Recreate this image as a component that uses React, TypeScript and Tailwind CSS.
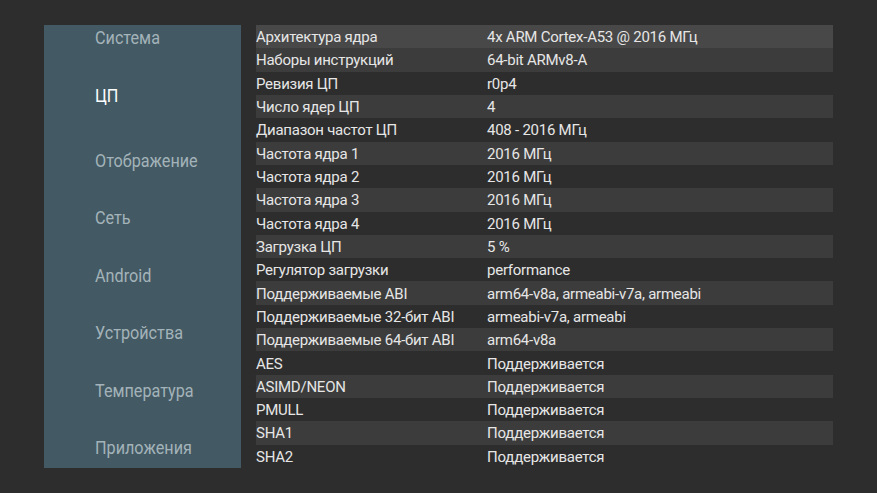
import React from "react";

const menu = [
  { label: "Система", mt: "mt-[2px]" },
  { label: "ЦП", active: true, mt: "mt-[36px]" },
  { label: "Отображение", mt: "mt-[43px]" },
  { label: "Сеть", mt: "mt-[35px]" },
  { label: "Android", mt: "mt-[36px]" },
  { label: "Устройства", mt: "mt-[35px]" },
  { label: "Температура", mt: "mt-[36px]" },
  { label: "Приложения", mt: "mt-[35px]" },
];

const rows: [string, string][] = [
  ["Архитектура ядра", "4x ARM Cortex-A53 @ 2016 МГц"],
  ["Наборы инструкций", "64-bit ARMv8-A"],
  ["Ревизия ЦП", "r0p4"],
  ["Число ядер ЦП", "4"],
  ["Диапазон частот ЦП", "408 - 2016 МГц"],
  ["Частота ядра 1", "2016 МГц"],
  ["Частота ядра 2", "2016 МГц"],
  ["Частота ядра 3", "2016 МГц"],
  ["Частота ядра 4", "2016 МГц"],
  ["Загрузка ЦП", "5 %"],
  ["Регулятор загрузки", "performance"],
  ["Поддерживаемые ABI", "arm64-v8a, armeabi-v7a, armeabi"],
  ["Поддерживаемые 32-бит ABI", "armeabi-v7a, armeabi"],
  ["Поддерживаемые 64-бит ABI", "arm64-v8a"],
  ["AES", "Поддерживается"],
  ["ASIMD/NEON", "Поддерживается"],
  ["PMULL", "Поддерживается"],
  ["SHA1", "Поддерживается"],
  ["SHA2", "Поддерживается"],
];

export default function App() {
  return (
    <div className="flex h-[493px] w-[877px] bg-[#2d2d2d] pt-[25px] pl-[44px] font-['Roboto',sans-serif]">
      <div className="flex h-[443px] w-[197px] flex-col bg-[#435a64] pl-[51px]">
        {menu.map((m) => (
          <div
            key={m.label}
            className={`${m.mt} h-[22px] origin-left scale-x-[0.9] text-[18px] leading-[22px] ${
              m.active ? "text-white" : "text-[#a3b3b9]"
            }`}
          >
            {m.label}
          </div>
        ))}
      </div>
      <div className="ml-[15px] flex w-[577px] flex-col">
        {rows.map(([k, v], i) => (
          <div
            key={k}
            className={`flex h-[23.32px] items-center pt-[1px] text-[15px] leading-[20px] tracking-[-0.25px] text-[#e6e6e6] ${
              i === 0 ? "bg-[#484848]" : i % 2 === 1 ? "bg-[#3c3c3c]" : ""
            }`}
          >
            <span className="w-[231px]">{k}</span>
            <span>{v}</span>
          </div>
        ))}
      </div>
    </div>
  );
}
